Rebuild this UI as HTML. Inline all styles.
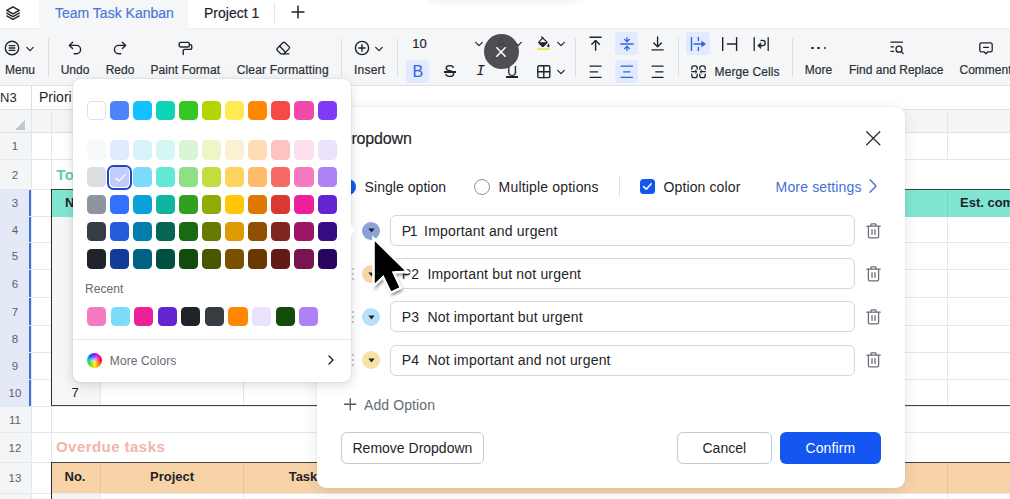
<!DOCTYPE html>
<html><head><meta charset="utf-8"><title>Team Task Kanban</title>
<style>
html,body{margin:0;padding:0;}
body{width:1010px;height:499px;overflow:hidden;position:relative;background:#fff;font-family:"Liberation Sans",sans-serif;color:#1f2329;}
.abs{position:absolute;}
.t{position:absolute;white-space:nowrap;line-height:1;}
.c{transform:translateX(-50%);}
.tl{font-size:12px;color:#2b2f36;-webkit-text-stroke:0.2px #2b2f36;}
svg{position:absolute;overflow:visible}
.sw{position:absolute;width:19px;height:19px;border-radius:4px;}
.hl{position:absolute;background:#e1eaff;border-radius:4px;}
.vd{position:absolute;width:1px;background:#dee0e3;}
.rn{position:absolute;left:0;width:30px;text-align:center;font-size:11.5px;color:#5c6169;line-height:1;}
.gl{position:absolute;background:#e6e7e9;}
.inp{position:absolute;left:390px;width:463px;height:29px;border:1px solid #d4d6da;border-radius:6px;background:#fff;}
.opt{position:absolute;left:401.8px;font-size:14px;color:#1f2329;white-space:pre;line-height:1;letter-spacing:0.18px}
</style></head><body>

<div class="abs" style="left:0;top:86px;width:1010px;height:413px;background:#fff"></div>
<div class="abs" style="left:0;top:109px;width:1010px;height:1px;background:#dee0e3"></div>
<div class="abs" style="left:31px;top:86px;width:1px;height:23px;background:#dee0e3"></div>
<div class="t" style="left:0px;top:91px;font-size:13px;color:#1f2329">N3</div>
<div class="t" style="left:39px;top:90px;font-size:14px;color:#1f2329">Priori</div>
<div class="abs" style="left:0;top:110px;width:1010px;height:22px;background:#f4f5f7;border-bottom:1px solid #dee0e3"></div>
<svg style="left:15px;top:120px" width="10" height="10"><polygon points="10,0 10,10 0,10" fill="#c3c6cb"/></svg>
<div class="abs" style="left:0;top:133px;width:31px;height:366px;background:#f4f5f7"></div>
<div class="abs" style="left:0;top:189px;width:29px;height:217px;background:#e4e9f7"></div>
<div class="abs" style="left:29px;top:189px;width:2px;height:217px;background:#3f6fdc"></div>
<div class="gl" style="left:0;top:159px;width:1010px;height:1px"></div>
<div class="gl" style="left:0;top:189px;width:1010px;height:1px"></div>
<div class="gl" style="left:0;top:216px;width:1010px;height:1px"></div>
<div class="gl" style="left:0;top:242px;width:1010px;height:1px"></div>
<div class="gl" style="left:0;top:269px;width:1010px;height:1px"></div>
<div class="gl" style="left:0;top:297px;width:1010px;height:1px"></div>
<div class="gl" style="left:0;top:325px;width:1010px;height:1px"></div>
<div class="gl" style="left:0;top:352px;width:1010px;height:1px"></div>
<div class="gl" style="left:0;top:379px;width:1010px;height:1px"></div>
<div class="gl" style="left:0;top:406px;width:1010px;height:1px"></div>
<div class="gl" style="left:0;top:432px;width:1010px;height:1px"></div>
<div class="gl" style="left:0;top:462px;width:1010px;height:1px"></div>
<div class="gl" style="left:0;top:493px;width:1010px;height:1px"></div>
<div class="gl" style="left:0;top:520px;width:1010px;height:1px"></div>
<div class="gl" style="left:31px;top:110px;width:1px;height:389px"></div>
<div class="gl" style="left:51px;top:110px;width:1px;height:389px"></div>
<div class="gl" style="left:100px;top:110px;width:1px;height:389px"></div>
<div class="gl" style="left:243px;top:110px;width:1px;height:389px"></div>
<div class="gl" style="left:947px;top:110px;width:1px;height:389px"></div>
<div class="rn" style="top:141.2px">1</div>
<div class="rn" style="top:169.7px">2</div>
<div class="rn" style="top:198.2px">3</div>
<div class="rn" style="top:224.7px">4</div>
<div class="rn" style="top:251.2px">5</div>
<div class="rn" style="top:278.7px">6</div>
<div class="rn" style="top:306.7px">7</div>
<div class="rn" style="top:334.2px">8</div>
<div class="rn" style="top:361.2px">9</div>
<div class="rn" style="top:388.2px">10</div>
<div class="rn" style="top:414.7px">11</div>
<div class="rn" style="top:442.7px">12</div>
<div class="rn" style="top:473.2px">13</div>
<div class="rn" style="top:502.2px">14</div>
<div class="abs" style="left:52px;top:160px;width:958px;height:29px;background:#fff"></div>
<div class="abs" style="left:52px;top:407px;width:958px;height:25px;background:#fff"></div>
<div class="abs" style="left:52px;top:433px;width:958px;height:29px;background:#fff"></div>
<div class="t" style="left:56.2px;top:166.5px;font-size:15px;letter-spacing:0.45px;font-weight:bold;color:#5ccdb6">To-do</div>
<div class="t" style="left:56px;top:439.4px;font-size:15px;letter-spacing:0.45px;font-weight:bold;color:#f4b3ab">Overdue tasks</div>
<div class="abs" style="left:51px;top:189px;width:959px;height:27.5px;background:#80e6d2"></div>
<div class="abs" style="left:947px;top:190px;width:1px;height:26px;background:#74d4c1"></div>
<div class="t" style="left:65px;top:196px;font-size:13px;font-weight:bold;color:#1f2329">No.</div>
<div class="t" style="left:960px;top:196px;font-size:13px;font-weight:bold;color:#1f2329">Est. completion</div>
<div class="abs" style="left:52px;top:217px;width:48px;height:189px;background:#f5f6f7"></div>
<div class="t c" style="left:75px;top:386px;font-size:13px;color:#1f2329">7</div>
<div class="abs" style="left:51px;top:189px;width:959px;height:1.2px;background:#3a4644"></div>
<div class="abs" style="left:51px;top:405px;width:959px;height:1.3px;background:#454545"></div>
<div class="abs" style="left:51px;top:189px;width:1px;height:217px;background:#2b2b2b"></div>
<div class="abs" style="left:51px;top:462px;width:959px;height:31px;background:#f8d3a8"></div>
<div class="abs" style="left:100px;top:463px;width:1px;height:30px;background:#ecc69b"></div>
<div class="abs" style="left:243px;top:463px;width:1px;height:30px;background:#ecc69b"></div>
<div class="abs" style="left:947px;top:463px;width:1px;height:30px;background:#ecc69b"></div>
<div class="abs" style="left:51px;top:462px;width:959px;height:1.3px;background:#454545"></div>
<div class="abs" style="left:51px;top:462px;width:1px;height:37px;background:#2b2b2b"></div>
<div class="abs" style="left:52px;top:494px;width:48px;height:5px;background:#f3f4f8"></div>
<div class="t c" style="left:75px;top:470.4px;font-size:13px;font-weight:bold">No.</div>
<div class="t c" style="left:172px;top:470.4px;font-size:13px;font-weight:bold">Project</div>
<div class="t c" style="left:303px;top:470.4px;font-size:13px;font-weight:bold">Task</div>
<div class="abs" style="left:0;top:0;width:1010px;height:28px;background:#fff"></div>
<div class="abs" style="left:39px;top:0;width:149px;height:29px;background:#f5f6f7"></div>
<div class="abs" style="left:0;top:0;width:39px;height:28px;background:#fff;border-bottom-right-radius:3px"></div>
<div class="abs" style="left:188px;top:0;width:100px;height:28px;background:#fff;border-bottom-left-radius:3px"></div>
<div class="t" style="left:55px;top:6px;font-size:14px;color:#4a7ad8;-webkit-text-stroke:0.2px #4a7ad8">Team Task Kanban</div>
<div class="t" style="left:204px;top:6px;font-size:14px;color:#1f2329;-webkit-text-stroke:0.2px #1f2329">Project 1</div>
<div class="abs" style="left:274px;top:2px;width:1px;height:22px;background:#e3e4e6"></div>
<svg style="left:291.3px;top:5.3px" width="14" height="14" viewBox="0 0 14 14"><path d="M7 0.5V13.5M0.5 7H13.5" stroke="#1f2329" stroke-width="1.5" fill="none"/></svg>
<svg style="left:5.6px;top:6px" width="14" height="14" viewBox="0 0 14 14" fill="none" stroke="#1f2329" stroke-width="1.4" stroke-linejoin="round" stroke-linecap="round"><path d="M7 0.8L13.2 4.3 7 7.8 0.8 4.3Z"/><path d="M0.8 7.1L7 10.6 13.2 7.1"/><path d="M0.8 9.9L7 13.4 13.2 9.9"/></svg>
<div class="abs" style="left:428px;top:-14px;width:150px;height:12px;border-radius:8px;box-shadow:0 2px 7px rgba(31,35,41,0.13)"></div>
<div class="abs" style="left:0;top:28px;width:1010px;height:57px;background:#f5f6f7"></div>
<div class="abs" style="left:0;top:28px;width:38px;height:1px;background:#eceef0"></div>
<div class="abs" style="left:189px;top:28px;width:821px;height:1px;background:#eceef0"></div>
<div class="abs" style="left:0;top:85px;width:1010px;height:1px;background:#e1e2e5"></div>
<div class="vd" style="left:48px;top:38px;height:39px"></div>
<div class="vd" style="left:341px;top:38px;height:39px"></div>
<div class="vd" style="left:397px;top:38px;height:39px"></div>
<div class="vd" style="left:575px;top:38px;height:39px"></div>
<div class="vd" style="left:678px;top:38px;height:39px"></div>
<div class="vd" style="left:792px;top:38px;height:39px"></div>
<div class="t c tl" style="left:20px;top:64px;letter-spacing:0px">Menu</div>
<div class="t c tl" style="left:75px;top:64px;letter-spacing:0px">Undo</div>
<div class="t c tl" style="left:120px;top:64px;letter-spacing:0px">Redo</div>
<div class="t c tl" style="left:185.3px;top:64px;letter-spacing:0.08px">Paint Format</div>
<div class="t c tl" style="left:282.7px;top:64px;letter-spacing:0.17px">Clear Formatting</div>
<div class="t c tl" style="left:369.7px;top:64px;letter-spacing:0.2px">Insert</div>
<div class="t c tl" style="left:818.5px;top:64px;letter-spacing:0px">More</div>
<div class="t c tl" style="left:896.2px;top:64px;letter-spacing:0.03px">Find and Replace</div>
<div class="t tl" style="left:959.5px;top:64px">Comments</div>
<div class="t tl" style="left:714.6px;top:66px;letter-spacing:0.08px">Merge Cells</div>
<div class="t" style="left:412.3px;top:37.3px;font-size:13px;color:#1f2329;-webkit-text-stroke:0.2px #1f2329">10</div>
<div class="hl" style="left:406px;top:60px;width:23px;height:23px"></div>
<div class="hl" style="left:615px;top:32px;width:23px;height:23px"></div>
<div class="hl" style="left:615px;top:60px;width:23px;height:23px"></div>
<div class="hl" style="left:686px;top:32px;width:24px;height:23px"></div><svg style="left:5.2px;top:40.8px" width="14" height="14" viewBox="0 0 14 14" fill="none" stroke="#1f2329" stroke-width="1.4" stroke-linecap="round" stroke-linejoin="round" ><circle cx="7" cy="7" r="6.7"/><path d="M4.2 4.6H9.8M4.2 7H9.8M4.2 9.4H9.8"/></svg>
<svg style="left:26px;top:45.5px" width="8" height="6" viewBox="0 0 8 6" fill="none" stroke="#1f2329" stroke-width="1.2" stroke-linecap="round" stroke-linejoin="round" ><path d="M0.7 1.3L4 4.6 7.3 1.3"/></svg>
<svg style="left:68px;top:41px" width="14" height="14" viewBox="0 0 14 14" fill="none" stroke="#1f2329" stroke-width="1.4" stroke-linecap="round" stroke-linejoin="round" ><path d="M4.6 1.2L1.4 4.4 4.6 7.6"/><path d="M1.6 4.4H8.4A4.2 4.2 0 0 1 8.4 12.8H6.2"/></svg>
<svg style="left:113px;top:41px" width="14" height="14" viewBox="0 0 14 14" fill="none" stroke="#1f2329" stroke-width="1.4" stroke-linecap="round" stroke-linejoin="round" ><path d="M9.4 1.2L12.6 4.4 9.4 7.6"/><path d="M12.4 4.4H5.6A4.2 4.2 0 0 0 5.6 12.8H7.8"/></svg>
<svg style="left:178px;top:41px" width="15" height="15" viewBox="0 0 15 15" fill="none" stroke="#1f2329" stroke-width="1.4" stroke-linecap="round" stroke-linejoin="round" ><rect x="1.2" y="1.4" width="10.2" height="4.6" rx="1.6"/><path d="M11.4 3.6H12.2A1.6 1.6 0 0 1 13.8 5.2V6.8A1.6 1.6 0 0 1 12.2 8.4H6.6A1.4 1.4 0 0 0 5.2 9.8V13.6"/></svg>
<svg style="left:276px;top:41px" width="15" height="15" viewBox="0 0 15 15" fill="none" stroke="#1f2329" stroke-width="1.3" stroke-linecap="round" stroke-linejoin="round" ><path d="M7.1 1.5A1.2 1.2 0 0 1 8.8 1.5L13.2 5.9A1.2 1.2 0 0 1 13.2 7.6L8 12.8H4.8L1.2 9.2A1.2 1.2 0 0 1 1.2 7.5Z"/><path d="M3.7 5.2L9.5 11.2"/><path d="M7.5 12.8H12.9"/></svg>
<svg style="left:354.7px;top:41px" width="14" height="14" viewBox="0 0 14 14" fill="none" stroke="#1f2329" stroke-width="1.4" stroke-linecap="round" stroke-linejoin="round" ><circle cx="7" cy="7" r="6.6"/><path d="M7 3.8V10.2M3.8 7H10.2"/></svg>
<svg style="left:375.3px;top:45.5px" width="8" height="6" viewBox="0 0 8 6" fill="none" stroke="#1f2329" stroke-width="1.2" stroke-linecap="round" stroke-linejoin="round" ><path d="M0.7 1.3L4 4.6 7.3 1.3"/></svg>
<svg style="left:474.5px;top:40.5px" width="8" height="6" viewBox="0 0 8 6" fill="none" stroke="#1f2329" stroke-width="1.2" stroke-linecap="round" stroke-linejoin="round" ><path d="M0.7 1.3L4 4.6 7.3 1.3"/></svg>
<div class="t c" style="left:417.8px;top:64.3px;font-size:16px;color:#2f66de;font-weight:normal">B</div>
<div class="t c" style="left:449.5px;top:63.8px;font-size:16px;color:#1f2329">S</div>
<div class="abs" style="left:443.5px;top:71.3px;width:12px;height:1.3px;background:#1f2329"></div>
<div class="t c" style="left:480.5px;top:64px;font-size:15px;color:#1f2329;font-style:italic;font-family:'Liberation Mono',monospace">I</div>
<div class="t c" style="left:512px;top:63.5px;font-size:14px;color:#1f2329">U</div>
<div class="abs" style="left:506px;top:76.3px;width:12px;height:1.3px;background:#1f2329"></div>
<div class="t c" style="left:501px;top:36px;font-size:14px;color:#1f2329">A</div>
<div class="abs" style="left:495px;top:48px;width:12px;height:2.5px;background:#d83931"></div>
<svg style="left:514px;top:40.5px" width="8" height="6" viewBox="0 0 8 6" fill="none" stroke="#1f2329" stroke-width="1.2" stroke-linecap="round" stroke-linejoin="round" ><path d="M0.7 1.3L4 4.6 7.3 1.3"/></svg>
<svg style="left:537px;top:36px" width="14" height="14" viewBox="0 0 14 14" fill="none" stroke="#1f2329" stroke-width="1.4" stroke-linecap="round" stroke-linejoin="round" ><path d="M5.8 2L10.2 6.4 6.4 10.2A0.9 0.9 0 0 1 5.2 10.2L2 7A0.9 0.9 0 0 1 2 5.8Z" fill="#fff" stroke-width="1.2"/><path d="M2 6.6H10L6 10.5Z" fill="#1f2329" stroke-width="0.6"/><path d="M5.8 2L4.6 0.8" stroke-width="1.2"/><path d="M11.4 8C12 8.8 12.4 9.4 12.4 9.9A1 1 0 0 1 10.4 9.9C10.4 9.4 10.8 8.8 11.4 8Z" fill="#1f2329" stroke-width="0.4"/></svg>
<div class="abs" style="left:537px;top:47.8px;width:12.5px;height:2.7px;background:#f1e566;border-radius:0.5px"></div>
<svg style="left:557px;top:40.5px" width="8" height="6" viewBox="0 0 8 6" fill="none" stroke="#1f2329" stroke-width="1.2" stroke-linecap="round" stroke-linejoin="round" ><path d="M0.7 1.3L4 4.6 7.3 1.3"/></svg>
<svg style="left:536.6px;top:64.7px" width="14" height="14" viewBox="0 0 14 14" fill="none" stroke="#1f2329" stroke-width="1.4" stroke-linecap="round" stroke-linejoin="round" ><rect x="0.8" y="0.8" width="12" height="11.8" rx="1.3"/><path d="M6.8 0.8V12.6M0.8 6.7H12.8"/></svg>
<svg style="left:557px;top:68.5px" width="8" height="6" viewBox="0 0 8 6" fill="none" stroke="#1f2329" stroke-width="1.2" stroke-linecap="round" stroke-linejoin="round" ><path d="M0.7 1.3L4 4.6 7.3 1.3"/></svg>
<svg style="left:589px;top:36px" width="14" height="15" viewBox="0 0 14 15" fill="none" stroke="#1f2329" stroke-width="1.4" stroke-linecap="round" stroke-linejoin="round" ><path d="M1.1 1.3H12.1"/><path d="M6.6 14.2V4.6"/><path d="M2.8 8.2L6.6 4.4 10.4 8.2"/></svg>
<svg style="left:620px;top:37px" width="14" height="14" viewBox="0 0 14 14" fill="none" stroke="#2f66de" stroke-width="1.3" stroke-linecap="round" stroke-linejoin="round" ><path d="M0.8 7H13.2"/><path d="M7 0.6V4.4M4.6 2.4L7 4.8 9.4 2.4"/><path d="M7 13.4V9.6M4.6 11.6L7 9.2 9.4 11.6"/></svg>
<svg style="left:651.4px;top:36px" width="14" height="15" viewBox="0 0 14 15" fill="none" stroke="#1f2329" stroke-width="1.4" stroke-linecap="round" stroke-linejoin="round" ><path d="M1.1 13.9H12.1"/><path d="M6.6 1V10.6"/><path d="M2.8 7L6.6 10.8 10.4 7"/></svg>
<svg style="left:589px;top:64.5px" width="14" height="14" viewBox="0 0 14 14" fill="none" stroke="#1f2329" stroke-width="1.3" stroke-linecap="round" stroke-linejoin="round" ><path d="M1.1 1.2H12.1M1.1 6.8H8.6M1.1 12.3H12.1"/></svg>
<svg style="left:620px;top:64.5px" width="14" height="14" viewBox="0 0 14 14" fill="none" stroke="#2f66de" stroke-width="1.3" stroke-linecap="round" stroke-linejoin="round" ><path d="M1.1 1.2H12.5M3.6 6.8H10M1.1 12.3H12.5"/></svg>
<svg style="left:651.4px;top:64.5px" width="14" height="14" viewBox="0 0 14 14" fill="none" stroke="#1f2329" stroke-width="1.3" stroke-linecap="round" stroke-linejoin="round" ><path d="M1.1 1.2H12.1M4.8 6.8H12.1M1.1 12.3H12.1"/></svg>
<svg style="left:690px;top:37px" width="17" height="14" viewBox="0 0 17 14" fill="none" stroke="#2f66de" stroke-width="1.4" stroke-linecap="round" stroke-linejoin="round" ><path d="M1.5 0.6V13.4"/><path d="M8.4 0.4V3.6M8.4 10.4V13.6"/><path d="M4 7H13"/><path d="M12 4.6L15.6 7 12 9.4Z" fill="#2f66de" stroke-width="0.8"/></svg>
<svg style="left:721px;top:37px" width="17" height="14" viewBox="0 0 17 14" fill="none" stroke="#1f2329" stroke-width="1.4" stroke-linecap="round" stroke-linejoin="round" ><path d="M1.7 0.6V13.4M15.6 0.6V13.4M6.4 7H15.6"/></svg>
<svg style="left:753px;top:37px" width="17" height="14" viewBox="0 0 17 14" fill="none" stroke="#1f2329" stroke-width="1.3" stroke-linecap="round" stroke-linejoin="round" ><path d="M1.2 0.6V13.4M15.2 0.6V13.4"/><path d="M5.4 8.6H9.6A2.6 2.6 0 0 0 9.6 3.4H8"/><path d="M7.6 6L4.8 8.6 7.6 11.2Z" fill="#1f2329" stroke-width="0.8"/></svg>
<svg style="left:691px;top:65px" width="15" height="14" viewBox="0 0 15 14" fill="none" stroke="#1f2329" stroke-width="1.3" stroke-linecap="round" stroke-linejoin="round" ><path d="M0.8 4.2V3A2.2 2.2 0 0 1 3 0.8H4A2.2 2.2 0 0 1 6.2 3V4.2"/><path d="M8.8 4.2V3A2.2 2.2 0 0 1 11 0.8H12A2.2 2.2 0 0 1 14.2 3V4.2"/><path d="M0.8 9.2V10.4A2.2 2.2 0 0 0 3 12.6H4A2.2 2.2 0 0 0 6.2 10.4V9.2"/><path d="M8.8 9.2V10.4A2.2 2.2 0 0 0 11 12.6H12A2.2 2.2 0 0 0 14.2 10.4V9.2"/><path d="M0.8 6.7H5.4M14.2 6.7H9.6"/><path d="M4.4 5.2L6 6.7 4.4 8.2M10.6 5.2L9 6.7 10.6 8.2" stroke-width="1"/></svg>
<div class="abs" style="left:811.2px;top:46.7px;width:2.6px;height:2.6px;border-radius:50%;background:#1f2329"></div>
<div class="abs" style="left:817.4000000000001px;top:46.7px;width:2.6px;height:2.6px;border-radius:50%;background:#1f2329"></div>
<div class="abs" style="left:823.6px;top:46.7px;width:2.6px;height:2.6px;border-radius:50%;background:#1f2329"></div>
<svg style="left:889.5px;top:41px" width="14" height="14" viewBox="0 0 14 14" fill="none" stroke="#1f2329" stroke-width="1.3" stroke-linecap="round" stroke-linejoin="round" ><path d="M1 1.2H12.4"/><path d="M1 5.8H3.6M1 10.4H3.6"/><circle cx="9" cy="8.2" r="3"/><path d="M11.3 10.6L13.2 12.6"/></svg>
<svg style="left:979px;top:41.5px" width="14" height="13" viewBox="0 0 14 13" fill="none" stroke="#1f2329" stroke-width="1.3" stroke-linecap="round" stroke-linejoin="round" ><path d="M2.4 0.8H11.6A1.6 1.6 0 0 1 13.2 2.4V8.2A1.6 1.6 0 0 1 11.6 9.8H9L7 11.8 5 9.8H2.4A1.6 1.6 0 0 1 0.8 8.2V2.4A1.6 1.6 0 0 1 2.4 0.8Z"/><path d="M4.6 5.4H9.4"/></svg>
<div class="abs" style="left:483.5px;top:34px;width:35px;height:35px;border-radius:50%;background:rgba(66,68,72,0.94)"></div>
<svg style="left:496px;top:46.5px" width="10" height="10" viewBox="0 0 10 10" fill="none" stroke="#fff" stroke-width="1.6" stroke-linecap="round" stroke-linejoin="round" ><path d="M0.8 0.8L9.2 9.2M9.2 0.8L0.8 9.2"/></svg><div class="abs" style="left:317px;top:106.6px;width:587.9px;height:381.4px;border-radius:9px;background:#fff;box-shadow:0 4px 16px rgba(31,35,41,0.10),0 0 2px rgba(31,35,41,0.10)"></div>
<div class="t" style="left:340px;top:131px;font-size:16px;color:#1f2329;letter-spacing:-0.15px;-webkit-text-stroke:0.15px #1f2329">Dropdown</div>
<svg style="left:865.5px;top:131px" width="14.5" height="14.5" viewBox="0 0 14.5 14.5" fill="none" stroke="#2b2f36" stroke-width="1.3" stroke-linecap="round" stroke-linejoin="round" ><path d="M0.7 0.7L13.8 13.8M13.8 0.7L0.7 13.8"/></svg>
<div class="abs" style="left:340.4px;top:178.6px;width:16px;height:16px;border-radius:50%;background:#1456f0"></div>
<div class="abs" style="left:345.9px;top:184.1px;width:5px;height:5px;border-radius:50%;background:#fff"></div>
<div class="t" style="left:364.6px;top:179.5px;font-size:14px;color:#1f2329;letter-spacing:0.05px">Single option</div>
<div class="abs" style="left:474px;top:179px;width:14px;height:14px;border-radius:50%;border:1px solid #8f959e;background:#fff"></div>
<div class="t" style="left:498.6px;top:179.5px;font-size:14px;color:#1f2329;letter-spacing:0.18px">Multiple options</div>
<div class="abs" style="left:619px;top:176px;width:1px;height:21px;background:#dee0e3"></div>
<div class="abs" style="left:639.5px;top:178.8px;width:15.5px;height:15.5px;border-radius:3.5px;background:#1456f0"></div>
<svg style="left:642px;top:182px" width="11" height="9" viewBox="0 0 11 9" fill="none" stroke="#fff" stroke-width="1.6" stroke-linecap="round" stroke-linejoin="round" ><path d="M1.6 4.6L4.3 7.2 9.2 1.8"/></svg>
<div class="t" style="left:663.5px;top:179.5px;font-size:14px;color:#1f2329;letter-spacing:0.12px">Option color</div>
<div class="t" style="left:775.6px;top:179.5px;font-size:14px;color:#3f6fd6;letter-spacing:0.15px">More settings</div>
<svg style="left:868.5px;top:179px" width="8" height="14" viewBox="0 0 8 14" fill="none" stroke="#3f6fd6" stroke-width="1.3" stroke-linecap="round" stroke-linejoin="round" ><path d="M1 0.8L7 7 1 13.2"/></svg>
<div class="inp" style="top:215px"></div>
<div class="opt" style="top:223.5px"><span style="letter-spacing:-1.5px">P1</span>  Important and urgent</div>
<div class="abs" style="left:362px;top:221.5px;width:18px;height:18px;border-radius:50%;background:#8ea2d6"></div>
<svg style="left:367.5px;top:228.3px" width="7" height="5" viewBox="0 0 7 5"><path d="M0.3 0.4H6.7L3.5 4.6Z" fill="#1f2329"/></svg>
<svg style="left:866px;top:222.5px" width="15" height="16" viewBox="0 0 15 16" fill="none" stroke="#6b7078" stroke-width="1.3" stroke-linecap="round" stroke-linejoin="round" ><path d="M0.8 3.2H14.2"/><path d="M5 3V1.6A0.8 0.8 0 0 1 5.8 0.8H9.2A0.8 0.8 0 0 1 10 1.6V3"/><path d="M2.4 3.4V13.4A1.4 1.4 0 0 0 3.8 14.8H11.2A1.4 1.4 0 0 0 12.6 13.4V3.4"/><path d="M6 6.6V11.4M9 6.6V11.4"/></svg>
<div class="inp" style="top:258.3px"></div>
<div class="opt" style="top:266.8px">P2  Important but not urgent</div>
<div class="abs" style="left:362px;top:264.8px;width:18px;height:18px;border-radius:50%;background:#f8d3a6"></div>
<svg style="left:367.5px;top:271.6px" width="7" height="5" viewBox="0 0 7 5"><path d="M0.3 0.4H6.7L3.5 4.6Z" fill="#1f2329"/></svg>
<div class="abs" style="left:351.8px;top:267.8px;width:1.8px;height:1.8px;border-radius:50%;background:#b5b9bf"></div>
<div class="abs" style="left:351.8px;top:272.8px;width:1.8px;height:1.8px;border-radius:50%;background:#b5b9bf"></div>
<div class="abs" style="left:351.8px;top:277.8px;width:1.8px;height:1.8px;border-radius:50%;background:#b5b9bf"></div>
<svg style="left:866px;top:265.8px" width="15" height="16" viewBox="0 0 15 16" fill="none" stroke="#6b7078" stroke-width="1.3" stroke-linecap="round" stroke-linejoin="round" ><path d="M0.8 3.2H14.2"/><path d="M5 3V1.6A0.8 0.8 0 0 1 5.8 0.8H9.2A0.8 0.8 0 0 1 10 1.6V3"/><path d="M2.4 3.4V13.4A1.4 1.4 0 0 0 3.8 14.8H11.2A1.4 1.4 0 0 0 12.6 13.4V3.4"/><path d="M6 6.6V11.4M9 6.6V11.4"/></svg>
<div class="inp" style="top:301.3px"></div>
<div class="opt" style="top:309.8px">P3  Not important but urgent</div>
<div class="abs" style="left:362px;top:307.8px;width:18px;height:18px;border-radius:50%;background:#b5e2f8"></div>
<svg style="left:367.5px;top:314.6px" width="7" height="5" viewBox="0 0 7 5"><path d="M0.3 0.4H6.7L3.5 4.6Z" fill="#1f2329"/></svg>
<div class="abs" style="left:351.8px;top:310.8px;width:1.8px;height:1.8px;border-radius:50%;background:#b5b9bf"></div>
<div class="abs" style="left:351.8px;top:315.8px;width:1.8px;height:1.8px;border-radius:50%;background:#b5b9bf"></div>
<div class="abs" style="left:351.8px;top:320.8px;width:1.8px;height:1.8px;border-radius:50%;background:#b5b9bf"></div>
<svg style="left:866px;top:308.8px" width="15" height="16" viewBox="0 0 15 16" fill="none" stroke="#6b7078" stroke-width="1.3" stroke-linecap="round" stroke-linejoin="round" ><path d="M0.8 3.2H14.2"/><path d="M5 3V1.6A0.8 0.8 0 0 1 5.8 0.8H9.2A0.8 0.8 0 0 1 10 1.6V3"/><path d="M2.4 3.4V13.4A1.4 1.4 0 0 0 3.8 14.8H11.2A1.4 1.4 0 0 0 12.6 13.4V3.4"/><path d="M6 6.6V11.4M9 6.6V11.4"/></svg>
<div class="inp" style="top:344.5px"></div>
<div class="opt" style="top:353.0px">P4  Not important and not urgent</div>
<div class="abs" style="left:362px;top:351.0px;width:18px;height:18px;border-radius:50%;background:#f7e2a3"></div>
<svg style="left:367.5px;top:357.8px" width="7" height="5" viewBox="0 0 7 5"><path d="M0.3 0.4H6.7L3.5 4.6Z" fill="#1f2329"/></svg>
<div class="abs" style="left:351.8px;top:354.0px;width:1.8px;height:1.8px;border-radius:50%;background:#b5b9bf"></div>
<div class="abs" style="left:351.8px;top:359.0px;width:1.8px;height:1.8px;border-radius:50%;background:#b5b9bf"></div>
<div class="abs" style="left:351.8px;top:364.0px;width:1.8px;height:1.8px;border-radius:50%;background:#b5b9bf"></div>
<svg style="left:866px;top:352.0px" width="15" height="16" viewBox="0 0 15 16" fill="none" stroke="#6b7078" stroke-width="1.3" stroke-linecap="round" stroke-linejoin="round" ><path d="M0.8 3.2H14.2"/><path d="M5 3V1.6A0.8 0.8 0 0 1 5.8 0.8H9.2A0.8 0.8 0 0 1 10 1.6V3"/><path d="M2.4 3.4V13.4A1.4 1.4 0 0 0 3.8 14.8H11.2A1.4 1.4 0 0 0 12.6 13.4V3.4"/><path d="M6 6.6V11.4M9 6.6V11.4"/></svg>
<svg style="left:344.2px;top:398px" width="12.5" height="12.5" viewBox="0 0 12.5 12.5" fill="none" stroke="#51565d" stroke-width="1.3" stroke-linecap="round" stroke-linejoin="round" ><path d="M6.25 0.6V11.9M0.6 6.25H11.9"/></svg>
<div class="t" style="left:364px;top:397.5px;font-size:14px;color:#646a73;letter-spacing:0.1px">Add Option</div>
<div class="abs" style="left:341px;top:431.8px;width:140.6px;height:29.8px;border:1px solid #c6c9ce;border-radius:6px;background:#fff"></div>
<div class="t" style="left:352.5px;top:441.2px;font-size:14px;color:#1f2329">Remove Dropdown</div>
<div class="abs" style="left:676.8px;top:431.8px;width:93.1px;height:29.8px;border:1px solid #c6c9ce;border-radius:6px;background:#fff"></div>
<div class="t c" style="left:724.3px;top:441.2px;font-size:14px;color:#1f2329">Cancel</div>
<div class="abs" style="left:779.8px;top:431.8px;width:101.2px;height:31.8px;border-radius:6px;background:#1456f0"></div>
<div class="t c" style="left:830.4px;top:441.2px;font-size:14px;color:#fff;letter-spacing:0.12px">Confirm</div>
<div class="abs" style="left:73px;top:79px;width:278px;height:302.6px;border-radius:8px;background:#fff;box-shadow:0 3px 12px rgba(31,35,41,0.16),0 0 2px rgba(31,35,41,0.14)"></div>
<div class="sw" style="left:87.00px;top:100.8px;width:19.1px;height:19.7px;border-radius:4.5px;background:#ffffff;box-shadow:inset 0 0 0 1px #dee0e3;"></div>
<div class="sw" style="left:110.05px;top:100.8px;width:19.1px;height:19.7px;border-radius:4.5px;background:#4e83fd;"></div>
<div class="sw" style="left:133.10px;top:100.8px;width:19.1px;height:19.7px;border-radius:4.5px;background:#14c0ff;"></div>
<div class="sw" style="left:156.15px;top:100.8px;width:19.1px;height:19.7px;border-radius:4.5px;background:#0dd3b7;"></div>
<div class="sw" style="left:179.20px;top:100.8px;width:19.1px;height:19.7px;border-radius:4.5px;background:#34c724;"></div>
<div class="sw" style="left:202.25px;top:100.8px;width:19.1px;height:19.7px;border-radius:4.5px;background:#b3d600;"></div>
<div class="sw" style="left:225.30px;top:100.8px;width:19.1px;height:19.7px;border-radius:4.5px;background:#ffea52;"></div>
<div class="sw" style="left:248.35px;top:100.8px;width:19.1px;height:19.7px;border-radius:4.5px;background:#ff8800;"></div>
<div class="sw" style="left:271.40px;top:100.8px;width:19.1px;height:19.7px;border-radius:4.5px;background:#f54a45;"></div>
<div class="sw" style="left:294.45px;top:100.8px;width:19.1px;height:19.7px;border-radius:4.5px;background:#f14ba9;"></div>
<div class="sw" style="left:317.50px;top:100.8px;width:19.1px;height:19.7px;border-radius:4.5px;background:#7f3bf5;"></div>
<div class="sw" style="left:87.00px;top:140.0px;width:19.1px;height:19.7px;border-radius:4.5px;background:#f8f9fb;"></div>
<div class="sw" style="left:110.05px;top:140.0px;width:19.1px;height:19.7px;border-radius:4.5px;background:#e1eaff;"></div>
<div class="sw" style="left:133.10px;top:140.0px;width:19.1px;height:19.7px;border-radius:4.5px;background:#d9f3fd;"></div>
<div class="sw" style="left:156.15px;top:140.0px;width:19.1px;height:19.7px;border-radius:4.5px;background:#d5f6f2;"></div>
<div class="sw" style="left:179.20px;top:140.0px;width:19.1px;height:19.7px;border-radius:4.5px;background:#d9f5d6;"></div>
<div class="sw" style="left:202.25px;top:140.0px;width:19.1px;height:19.7px;border-radius:4.5px;background:#eef6c6;"></div>
<div class="sw" style="left:225.30px;top:140.0px;width:19.1px;height:19.7px;border-radius:4.5px;background:#faf1d1;"></div>
<div class="sw" style="left:248.35px;top:140.0px;width:19.1px;height:19.7px;border-radius:4.5px;background:#fedcb4;"></div>
<div class="sw" style="left:271.40px;top:140.0px;width:19.1px;height:19.7px;border-radius:4.5px;background:#fcc3c0;"></div>
<div class="sw" style="left:294.45px;top:140.0px;width:19.1px;height:19.7px;border-radius:4.5px;background:#fddfef;"></div>
<div class="sw" style="left:317.50px;top:140.0px;width:19.1px;height:19.7px;border-radius:4.5px;background:#ece2fe;"></div>
<div class="sw" style="left:87.00px;top:167.4px;width:19.1px;height:19.7px;border-radius:4.5px;background:#dcdde1;"></div>
<div class="sw" style="left:110.05px;top:167.4px;width:19.1px;height:19.7px;border-radius:4.5px;background:#c1ccfb;"></div>
<div class="sw" style="left:133.10px;top:167.4px;width:19.1px;height:19.7px;border-radius:4.5px;background:#7edafb;"></div>
<div class="sw" style="left:156.15px;top:167.4px;width:19.1px;height:19.7px;border-radius:4.5px;background:#64e8d6;"></div>
<div class="sw" style="left:179.20px;top:167.4px;width:19.1px;height:19.7px;border-radius:4.5px;background:#8ee085;"></div>
<div class="sw" style="left:202.25px;top:167.4px;width:19.1px;height:19.7px;border-radius:4.5px;background:#c3dd40;"></div>
<div class="sw" style="left:225.30px;top:167.4px;width:19.1px;height:19.7px;border-radius:4.5px;background:#fdd55e;"></div>
<div class="sw" style="left:248.35px;top:167.4px;width:19.1px;height:19.7px;border-radius:4.5px;background:#ffba6b;"></div>
<div class="sw" style="left:271.40px;top:167.4px;width:19.1px;height:19.7px;border-radius:4.5px;background:#f76964;"></div>
<div class="sw" style="left:294.45px;top:167.4px;width:19.1px;height:19.7px;border-radius:4.5px;background:#f57ac0;"></div>
<div class="sw" style="left:317.50px;top:167.4px;width:19.1px;height:19.7px;border-radius:4.5px;background:#ad82f7;"></div>
<div class="sw" style="left:87.00px;top:194.60000000000002px;width:19.1px;height:19.7px;border-radius:4.5px;background:#8f959e;"></div>
<div class="sw" style="left:110.05px;top:194.60000000000002px;width:19.1px;height:19.7px;border-radius:4.5px;background:#3370ff;"></div>
<div class="sw" style="left:133.10px;top:194.60000000000002px;width:19.1px;height:19.7px;border-radius:4.5px;background:#0aa0d8;"></div>
<div class="sw" style="left:156.15px;top:194.60000000000002px;width:19.1px;height:19.7px;border-radius:4.5px;background:#10b5a0;"></div>
<div class="sw" style="left:179.20px;top:194.60000000000002px;width:19.1px;height:19.7px;border-radius:4.5px;background:#2ea121;"></div>
<div class="sw" style="left:202.25px;top:194.60000000000002px;width:19.1px;height:19.7px;border-radius:4.5px;background:#8fac02;"></div>
<div class="sw" style="left:225.30px;top:194.60000000000002px;width:19.1px;height:19.7px;border-radius:4.5px;background:#ffc60a;"></div>
<div class="sw" style="left:248.35px;top:194.60000000000002px;width:19.1px;height:19.7px;border-radius:4.5px;background:#de7802;"></div>
<div class="sw" style="left:271.40px;top:194.60000000000002px;width:19.1px;height:19.7px;border-radius:4.5px;background:#d83931;"></div>
<div class="sw" style="left:294.45px;top:194.60000000000002px;width:19.1px;height:19.7px;border-radius:4.5px;background:#ee1f9a;"></div>
<div class="sw" style="left:317.50px;top:194.60000000000002px;width:19.1px;height:19.7px;border-radius:4.5px;background:#6425d0;"></div>
<div class="sw" style="left:87.00px;top:221.8px;width:19.1px;height:19.7px;border-radius:4.5px;background:#373c43;"></div>
<div class="sw" style="left:110.05px;top:221.8px;width:19.1px;height:19.7px;border-radius:4.5px;background:#245bdb;"></div>
<div class="sw" style="left:133.10px;top:221.8px;width:19.1px;height:19.7px;border-radius:4.5px;background:#037eaa;"></div>
<div class="sw" style="left:156.15px;top:221.8px;width:19.1px;height:19.7px;border-radius:4.5px;background:#076555;"></div>
<div class="sw" style="left:179.20px;top:221.8px;width:19.1px;height:19.7px;border-radius:4.5px;background:#1a6a14;"></div>
<div class="sw" style="left:202.25px;top:221.8px;width:19.1px;height:19.7px;border-radius:4.5px;background:#667901;"></div>
<div class="sw" style="left:225.30px;top:221.8px;width:19.1px;height:19.7px;border-radius:4.5px;background:#dc9b04;"></div>
<div class="sw" style="left:248.35px;top:221.8px;width:19.1px;height:19.7px;border-radius:4.5px;background:#8f4f04;"></div>
<div class="sw" style="left:271.40px;top:221.8px;width:19.1px;height:19.7px;border-radius:4.5px;background:#812520;"></div>
<div class="sw" style="left:294.45px;top:221.8px;width:19.1px;height:19.7px;border-radius:4.5px;background:#9c1666;"></div>
<div class="sw" style="left:317.50px;top:221.8px;width:19.1px;height:19.7px;border-radius:4.5px;background:#380d82;"></div>
<div class="sw" style="left:87.00px;top:249.10000000000002px;width:19.1px;height:19.7px;border-radius:4.5px;background:#1f2329;"></div>
<div class="sw" style="left:110.05px;top:249.10000000000002px;width:19.1px;height:19.7px;border-radius:4.5px;background:#133c9a;"></div>
<div class="sw" style="left:133.10px;top:249.10000000000002px;width:19.1px;height:19.7px;border-radius:4.5px;background:#006185;"></div>
<div class="sw" style="left:156.15px;top:249.10000000000002px;width:19.1px;height:19.7px;border-radius:4.5px;background:#004f43;"></div>
<div class="sw" style="left:179.20px;top:249.10000000000002px;width:19.1px;height:19.7px;border-radius:4.5px;background:#124b0c;"></div>
<div class="sw" style="left:202.25px;top:249.10000000000002px;width:19.1px;height:19.7px;border-radius:4.5px;background:#495700;"></div>
<div class="sw" style="left:225.30px;top:249.10000000000002px;width:19.1px;height:19.7px;border-radius:4.5px;background:#795101;"></div>
<div class="sw" style="left:248.35px;top:249.10000000000002px;width:19.1px;height:19.7px;border-radius:4.5px;background:#6b3900;"></div>
<div class="sw" style="left:271.40px;top:249.10000000000002px;width:19.1px;height:19.7px;border-radius:4.5px;background:#621c18;"></div>
<div class="sw" style="left:294.45px;top:249.10000000000002px;width:19.1px;height:19.7px;border-radius:4.5px;background:#7a1450;"></div>
<div class="sw" style="left:317.50px;top:249.10000000000002px;width:19.1px;height:19.7px;border-radius:4.5px;background:#270561;"></div>
<div class="abs" style="left:107.35px;top:164.7px;width:20.5px;height:21.1px;border-radius:6.5px;border:2.2px solid #1f49c2"></div>
<svg style="left:114.55px;top:173.6px" width="11" height="8" viewBox="0 0 11 8" fill="none" stroke="#fff" stroke-width="1.4" stroke-linecap="round" stroke-linejoin="round" ><path d="M1 4.2L4 7 10 1"/></svg>
<svg style="left:350px;top:223px" width="8" height="14" viewBox="0 0 8 14"><path d="M0.5 1L6.5 7 0.5 13Z" fill="#fff" stroke="#e4e5e8" stroke-width="0.8"/><rect x="0" y="0" width="1" height="14" fill="#fff"/></svg>
<div class="t" style="left:85px;top:283px;font-size:12px;color:#646a73;letter-spacing:0.05px">Recent</div>
<div class="sw" style="left:87.00px;top:306.8px;width:19.1px;height:19.7px;border-radius:4.5px;background:#f57ac0"></div>
<div class="sw" style="left:110.57px;top:306.8px;width:19.1px;height:19.7px;border-radius:4.5px;background:#7edafb"></div>
<div class="sw" style="left:134.14px;top:306.8px;width:19.1px;height:19.7px;border-radius:4.5px;background:#ee1f9a"></div>
<div class="sw" style="left:157.71px;top:306.8px;width:19.1px;height:19.7px;border-radius:4.5px;background:#6425d0"></div>
<div class="sw" style="left:181.28px;top:306.8px;width:19.1px;height:19.7px;border-radius:4.5px;background:#1f2329"></div>
<div class="sw" style="left:204.85px;top:306.8px;width:19.1px;height:19.7px;border-radius:4.5px;background:#373c43"></div>
<div class="sw" style="left:228.42px;top:306.8px;width:19.1px;height:19.7px;border-radius:4.5px;background:#ff8800"></div>
<div class="sw" style="left:251.99px;top:306.8px;width:19.1px;height:19.7px;border-radius:4.5px;background:#ece2fe"></div>
<div class="sw" style="left:275.56px;top:306.8px;width:19.1px;height:19.7px;border-radius:4.5px;background:#124b0c"></div>
<div class="sw" style="left:299.13px;top:306.8px;width:19.1px;height:19.7px;border-radius:4.5px;background:#ad82f7"></div>
<div class="abs" style="left:73px;top:339px;width:278px;height:1px;background:#e6e7ea"></div>
<div class="abs" style="left:86.7px;top:352.7px;width:15px;height:15px;border-radius:50%;background:radial-gradient(circle,rgba(255,255,255,0.75) 0,rgba(255,255,255,0) 55%),conic-gradient(from 0deg,#7a22e8 0deg,#f010d0 40deg,#ff1010 90deg,#ff7a00 130deg,#ffe600 180deg,#58e000 230deg,#00d8c8 275deg,#1848ff 320deg,#7a22e8 360deg)"></div>
<div class="t" style="left:109.8px;top:354.7px;font-size:12px;color:#666b73;letter-spacing:0.12px">More Colors</div>
<svg style="left:327.6px;top:355px" width="6" height="10" viewBox="0 0 6 10" fill="none" stroke="#1f2329" stroke-width="1.4" stroke-linecap="round" stroke-linejoin="round" ><path d="M1 1L5 5 1 9"/></svg>
<svg style="left:360px;top:225px" width="70" height="85" viewBox="360 225 70 85"><defs><filter id="cs" x="-30%" y="-30%" width="170%" height="170%"><feGaussianBlur stdDeviation="1.6"/></filter></defs><polygon points="374.9,241.6 374.9,283 383.5,274.8 391.3,290.9 399,287.3 391.5,271.2 404.4,270.6" transform="translate(1.5,2.5)" fill="rgba(0,0,0,0.35)" stroke="rgba(0,0,0,0.35)" stroke-width="4" filter="url(#cs)"/><polygon points="374.9,241.6 374.9,283 383.5,274.8 391.3,290.9 399,287.3 391.5,271.2 404.4,270.6" fill="#000" stroke="#fff" stroke-width="5.4" stroke-linejoin="miter" stroke-miterlimit="10" paint-order="stroke"/><polygon points="374.9,241.6 374.9,283 383.5,274.8 391.3,290.9 399,287.3 391.5,271.2 404.4,270.6" fill="#000"/></svg></body></html>
